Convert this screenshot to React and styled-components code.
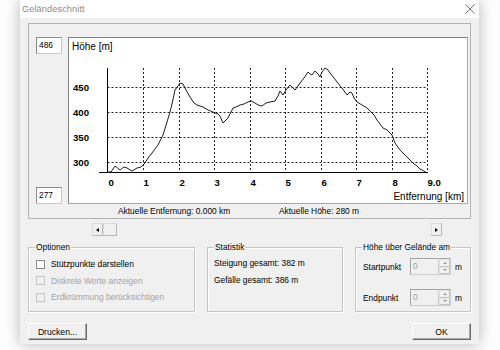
import React from 'react';
import styled, { createGlobalStyle } from 'styled-components';

const profile = [
  [107, 172], [111, 172], [115, 166], [120, 170], [124, 167], [127, 168], [132, 171], [137, 168],
  [141, 167], [145, 163], [148, 158], [152, 153], [158, 145], [163, 135], [167, 122], [170, 112],
  [172, 104], [175, 90], [178, 86], [180, 83], [183, 84], [186, 90], [190, 97], [194, 103],
  [197, 105], [203, 107], [208, 110], [213, 112], [218, 114], [220, 116], [223, 123], [226, 120],
  [228, 118], [233, 108], [236, 107], [240, 105], [244, 104], [248, 102], [251, 101], [255, 103],
  [258, 105], [262, 106], [266, 103], [270, 102], [275, 101], [278, 96], [280, 91], [283, 95],
  [286, 90], [290, 85], [293, 88], [295, 90], [298, 86], [300, 83], [304, 78], [308, 72],
  [310, 74], [312, 75], [315, 71], [318, 74], [320, 77], [322, 72], [325, 68], [328, 70],
  [330, 73], [334, 78], [337, 82], [342, 88], [347, 95], [350, 92], [352, 93], [354, 98],
  [357, 102], [362, 105], [367, 108], [370, 111], [374, 115], [377, 120], [380, 124], [383, 128],
  [387, 130], [390, 133], [392, 135], [395, 143], [400, 150], [404, 154], [407, 157], [410, 160],
  [413, 163], [417, 166], [420, 169], [424, 171], [427, 173],
];

const yTicks = [
  { label: '450', y: 87.5 },
  { label: '400', y: 112.5 },
  { label: '350', y: 137.5 },
  { label: '300', y: 162.5 },
];

const X0 = 107.5;
const KM = 35.5;
const xTicks = ['0', '1', '2', '3', '4', '5', '6', '7', '8', '9.0'];

export default function App() {
  return (
    <>
      <GlobalStyle />
      <Page>
        <Dialog>
          <TitleBar>
            <Title>Geländeschnitt</Title>
            <svg width="10" height="10" viewBox="0 0 10 10">
              <path d="M0.5 0.5 L9.5 9.5 M9.5 0.5 L0.5 9.5" stroke="#7a7a7a" strokeWidth="1" />
            </svg>
          </TitleBar>

          <Body>
            <Panel>
              <PlotRow>
                <SideCol>
                  <ValueBox>486</ValueBox>
                  <ValueBox>277</ValueBox>
                </SideCol>
                <ChartBox>
                  <ProfileChart />
                </ChartBox>
              </PlotRow>
              <StatusRow>
                <StatusText $w={161}>Aktuelle Entfernung: 0.000 km</StatusText>
                <StatusText>Aktuelle Höhe: 280 m</StatusText>
              </StatusRow>
            </Panel>

            <Scrollbar>
              <ScrollButton><Arrow $dir="left" /></ScrollButton>
              <Thumb />
              <Track />
              <ScrollButton><Arrow $dir="right" /></ScrollButton>
            </Scrollbar>

            <GroupsRow>
              <Group $w={167}>
                <Legend>Optionen</Legend>
                <CheckList>
                  <CheckRow>
                    <CheckBox />
                    <span>Stützpunkte darstellen</span>
                  </CheckRow>
                  <CheckRow $disabled>
                    <CheckBox $disabled />
                    <span>Diskrete Werte anzeigen</span>
                  </CheckRow>
                  <CheckRow $disabled>
                    <CheckBox $disabled />
                    <span>Erdkrümmung berücksichtigen</span>
                  </CheckRow>
                </CheckList>
              </Group>

              <Group $w={136}>
                <Legend>Statistik</Legend>
                <StatList>
                  <span>Steigung gesamt: 382 m</span>
                  <span>Gefälle gesamt: 386 m</span>
                </StatList>
              </Group>

              <Group $w={116}>
                <Legend>Höhe über Gelände am</Legend>
                <SpinList>
                  <SpinRow>
                    <SpinLabel>Startpunkt</SpinLabel>
                    <SpinInput>0</SpinInput>
                    <Spinner><SpinHalf><Arrow $dir="up" $gray /></SpinHalf><SpinHalf><Arrow $dir="down" $gray /></SpinHalf></Spinner>
                    <Unit>m</Unit>
                  </SpinRow>
                  <SpinRow>
                    <SpinLabel>Endpunkt</SpinLabel>
                    <SpinInput>0</SpinInput>
                    <Spinner><SpinHalf><Arrow $dir="up" $gray /></SpinHalf><SpinHalf><Arrow $dir="down" $gray /></SpinHalf></Spinner>
                    <Unit>m</Unit>
                  </SpinRow>
                </SpinList>
              </Group>
            </GroupsRow>

            <ButtonRow>
              <Button>Drucken...</Button>
              <Button>OK</Button>
            </ButtonRow>
          </Body>
        </Dialog>
      </Page>
    </>
  );
}

function ProfileChart() {
  const pts = profile.map(([x, y]) => `${x},${y}`).join(' ');
  return (
    <svg width="398" height="165" viewBox="69 38 398 165" style={{ display: 'block' }}>
      {/* gitter */}
      {yTicks.map((t) => (
        <line key={t.label} x1={X0} x2={427.5} y1={t.y} y2={t.y} stroke="#222" strokeDasharray="2 2" />
      ))}
      {xTicks.slice(1).map((_, i) => {
        const x = Math.round(X0 + KM * (i + 1)) + 0.5;
        return <line key={i} x1={x} x2={x} y1={68} y2={172} stroke="#222" strokeDasharray="2 2" />;
      })}

      {/* achsen */}
      <line x1={X0} x2={X0} y1={68} y2={173} stroke="#000" />
      <line x1={99} x2={428} y1={172.5} y2={172.5} stroke="#000" />

      <polyline points={pts} fill="none" stroke="#1e1e1e" strokeWidth="1" strokeLinejoin="round" />

      <ChartLabel x={72} y={50}>Höhe [m]</ChartLabel>
      {yTicks.map((t) => (
        <TickLabel key={t.label} x={73} y={t.y + 3.5}>{t.label}</TickLabel>
      ))}
      {xTicks.map((l, i) => (
        <TickLabel key={l} x={Math.round(X0 + KM * i) + 0.5} y={186}>{l}</TickLabel>
      ))}
      <ChartLabel x={464} y={200} textAnchor="end">Entfernung [km]</ChartLabel>
    </svg>
  );
}

const GlobalStyle = createGlobalStyle`
  html, body {
    margin: 0;
    padding: 0;
    background: #fdfdfd;
  }
  body {
    font-family: "Liberation Sans", Arial, sans-serif;
  }
`;

const Page = styled.div`
  width: 500px;
  height: 350px;
  overflow: hidden;
  padding-left: 20px;
  box-sizing: border-box;
`;

const Dialog = styled.div`
  width: 459px;
  height: 344px;
  display: flex;
  flex-direction: column;
  background: #f0f0f0;
  box-shadow: 0 0 14px rgba(0, 0, 0, 0.28);
  font-size: 8.4px;
  color: #000;
`;

const TitleBar = styled.div`
  height: 18px;
  display: flex;
  align-items: center;
  justify-content: space-between;
  padding: 0 4px 0 2px;
  background: #fff;
`;

const Title = styled.span`
  font-size: 9.2px;
  color: #8a8a8a;
  letter-spacing: 0.1px;
`;

const Body = styled.div`
  flex: 1;
  display: flex;
  flex-direction: column;
  padding: 5px 8px 4px;
`;

const Panel = styled.div`
  height: 196px;
  box-sizing: border-box;
  display: flex;
  flex-direction: column;
  padding: 13px 2px 0 7px;
  border: 1px solid #b4b4b4;
`;

const PlotRow = styled.div`
  display: flex;
  gap: 6px;
  height: 167px;
`;

const SideCol = styled.div`
  width: 26px;
  display: flex;
  flex-direction: column;
  justify-content: space-between;
`;

const ValueBox = styled.div`
  width: 26px;
  height: 17px;
  box-sizing: border-box;
  padding: 0 2px;
  line-height: 15px;
  background: #fff;
  border: 1px solid #c8c8c8;
  border-top-color: #8c8c8c;
  border-left-color: #8c8c8c;
`;

const ChartBox = styled.div`
  width: 400px;
  height: 167px;
  box-sizing: border-box;
  background: #fff;
  border: 1px solid #a8a8a8;
  border-top-color: #828282;
  border-left-color: #828282;
`;

const ChartLabel = styled.text`
  font-family: "Liberation Sans", Arial, sans-serif;
  font-size: 10px;
  fill: #000;
`;

const TickLabel = styled.text`
  font-family: "Liberation Sans", Arial, sans-serif;
  font-size: 9.6px;
  font-weight: bold;
  fill: #000;
`;

const StatusRow = styled.div`
  flex: 1;
  display: flex;
  align-items: center;
  padding-left: 82px;
`;

const StatusText = styled.span`
  width: ${(p) => (p.$w ? `${p.$w}px` : 'auto')};
`;

const Scrollbar = styled.div`
  margin: 4px 0 0 64px;
  width: 350px;
  height: 13px;
  display: flex;
`;

const ScrollButton = styled.div`
  width: 11px;
  height: 13px;
  box-sizing: border-box;
  display: flex;
  align-items: center;
  justify-content: center;
  background: #f0f0f0;
  border: 1px solid #dcdcdc;
  border-right-color: #b8b8b8;
  border-bottom-color: #b8b8b8;
`;

const Thumb = styled(ScrollButton)`
  width: 14px;
`;

const Track = styled.div`
  flex: 1;
  background: #f0f0f0;
`;

const Arrow = styled.span`
  width: 0;
  height: 0;
  border-style: solid;
  border-color: transparent;
  ${(p) => {
    const c = p.$gray ? '#9a9a9a' : '#000';
    if (p.$dir === 'left') return `border-width: 2.5px 3px 2.5px 0; border-right-color: ${c};`;
    if (p.$dir === 'right') return `border-width: 2.5px 0 2.5px 3px; border-left-color: ${c};`;
    if (p.$dir === 'up') return `border-width: 0 2px 2px 2px; border-bottom-color: ${c};`;
    return `border-width: 2px 2px 0 2px; border-top-color: ${c};`;
  }}
`;

const GroupsRow = styled.div`
  display: flex;
  justify-content: space-between;
  margin-top: 6px;
`;

const Group = styled.fieldset`
  width: ${(p) => p.$w}px;
  height: 70px;
  box-sizing: border-box;
  margin: 0;
  padding: 0 6px;
  min-width: 0;
  border: 1px solid #c6c6c6;
  box-shadow: 1px 1px 0 #fff, inset 1px 1px 0 #fff;
`;

const Legend = styled.legend`
  padding: 0 1px;
  font-size: 8.4px;
  line-height: 10px;
`;

const CheckList = styled.div`
  display: flex;
  flex-direction: column;
  margin-top: 4px;
`;

const CheckRow = styled.div`
  height: 16.5px;
  display: flex;
  align-items: center;
  gap: 6px;
  padding-left: 1px;
  color: ${(p) => (p.$disabled ? '#a3a3a3' : '#000')};
`;

const CheckBox = styled.span`
  width: 9px;
  height: 9px;
  box-sizing: border-box;
  background: ${(p) => (p.$disabled ? '#f0f0f0' : '#fff')};
  border: 1px solid ${(p) => (p.$disabled ? '#c4c4c4' : '#8a8a8a')};
`;

const StatList = styled.div`
  display: flex;
  flex-direction: column;
  gap: 7px;
  margin-top: 6px;
`;

const SpinList = styled.div`
  display: flex;
  flex-direction: column;
  gap: 14px;
  margin-top: 6px;
`;

const SpinRow = styled.div`
  height: 17px;
  display: flex;
  align-items: center;
  padding-left: 1px;
`;

const SpinLabel = styled.span`
  width: 47px;
`;

const SpinInput = styled.div`
  width: 28px;
  height: 17px;
  box-sizing: border-box;
  padding: 0 2px;
  line-height: 15px;
  color: #a0a0a0;
  background: #f0f0f0;
  border: 1px solid #cfcfcf;
  border-top-color: #a4a4a4;
  border-left-color: #a4a4a4;
  border-right: none;
`;

const Spinner = styled.div`
  width: 13px;
  height: 17px;
  box-sizing: border-box;
  display: flex;
  flex-direction: column;
  border: 1px solid #cfcfcf;
  border-top-color: #a4a4a4;
`;

const SpinHalf = styled.div`
  flex: 1;
  display: flex;
  align-items: center;
  justify-content: center;
  background: #f0f0f0;
  border: 1px solid #e4e4e4;
  border-right-color: #c4c4c4;
  border-bottom-color: #c4c4c4;
`;

const Unit = styled.span`
  margin-left: 4px;
`;

const ButtonRow = styled.div`
  display: flex;
  justify-content: space-between;
  margin-top: 11px;
`;

const Button = styled.button`
  width: 59px;
  height: 17px;
  padding: 0;
  font-family: "Liberation Sans", Arial, sans-serif;
  font-size: 8.6px;
  color: #000;
  background: #f0f0f0;
  border: 1px solid #fff;
  border-right-color: #6a6a6a;
  border-bottom-color: #6a6a6a;
  box-shadow: inset -1px -1px 0 #a8a8a8;
`;
